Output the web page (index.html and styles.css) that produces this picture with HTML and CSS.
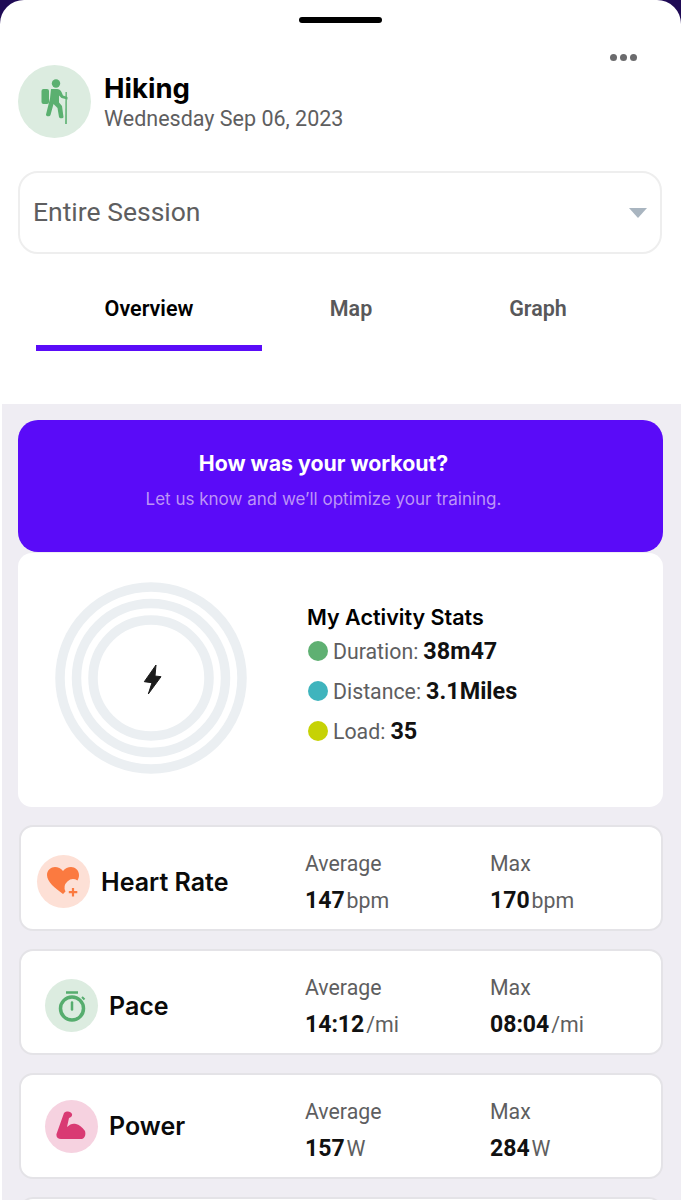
FILE: index.html
```html
<!DOCTYPE html>
<html lang="en">
<head>
<meta charset="utf-8">
<title>Hiking</title>
<link rel="stylesheet" href="styles.css">
</head>
<body>
<div class="sheet">
  <header class="top">
    <div class="handle"></div>
    <div class="dots"><i></i><i></i><i></i></div>
    <div class="activity">
      <div class="badge badge-hike">
        <svg width="28" height="46" viewBox="0 0 28 46"><circle cx="15" cy="4.500" r="4.200" fill="#5bb070"/><rect x="0.500" y="10" width="7.500" height="15" rx="2" fill="#5bb070"/><path d="M10 10h6c2 0 3.500 1 4.500 3l1.500 3.500 4.500 1.500v2.500l-6-1.500-2.500-2.500v7l3 3.500 1.500 11c.2 1.500-4 2-4.500 0l-1.500-9-4-4-3 11c-.5 2-5 1.500-4.500-.5l4-16z" fill="#5bb070"/><path d="M24.500 13h1.300v32h-1.600z" fill="#5bb070"/></svg>
      </div>
      <div class="activity-text">
        <div class="activity-name">Hiking</div>
        <div class="activity-date">Wednesday Sep 06, 2023</div>
      </div>
    </div>
    <div class="select">
      <span>Entire Session</span>
      <span class="caret"></span>
    </div>
    <nav class="tabs">
      <div class="tab tab-active">Overview</div>
      <div class="tab">Map</div>
      <div class="tab">Graph</div>
    </nav>
  </header>
  <main class="content">
    <section class="banner">
      <h2>How was your workout?</h2>
      <p>Let us know and we’ll optimize your training.</p>
    </section>
    <section class="stats">
      <div class="rings">
        <svg width="192" height="192" viewBox="0 0 192 192" fill="none" stroke="#ebeff2" stroke-width="9.500"><circle cx="96" cy="96" r="91"/><circle cx="96" cy="96" r="74.500"/><circle cx="96" cy="96" r="58"/><path d="M101 83L89.300 99.700 97 100.700 93.300 112 106 94.700 100 94z" fill="#1c1c1c" stroke="#1c1c1c" stroke-width="1" stroke-linejoin="round"/></svg>
      </div>
      <div class="stats-list">
        <h3>My Activity Stats</h3>
        <div class="stat"><i class="dot dot-green"></i><span class="stat-label">Duration:</span><b>38m47</b></div>
        <div class="stat"><i class="dot dot-teal"></i><span class="stat-label">Distance:</span><b>3.1Miles</b></div>
        <div class="stat"><i class="dot dot-lime"></i><span class="stat-label">Load:</span><b>35</b></div>
      </div>
    </section>
    <section class="metric">
      <div class="metric-name metric-wide">
        <div class="icon icon-heart">
          <svg width="34" height="32" viewBox="0 0 34 32"><path d="M16 28C8 22 0 16 0 9c0-5 4-8 8-8 3 0 6 1.500 8 4 2-2.500 5-4 8-4 4 0 8 3 8 8 0 2-.5 3.500-1.500 5.500a8.500 8.500 0 0 0-12 11z" fill="#fb7a40"/><path d="M26 22v8.500M21.800 26.200h8.500" stroke="#fb7a40" stroke-width="2.200" fill="none"/></svg>
        </div>
        <span>Heart Rate</span>
      </div>
      <div class="val"><div class="val-head">Average</div><div class="val-num"><b>147</b><span>bpm</span></div></div>
      <div class="val"><div class="val-head">Max</div><div class="val-num"><b>170</b><span>bpm</span></div></div>
    </section>
    <section class="metric">
      <div class="metric-name">
        <div class="icon icon-pace">
          <svg width="30" height="32" viewBox="0 0 30 32" fill="none" stroke="#56ad6e" stroke-width="3.500"><circle cx="15" cy="18.500" r="11.500"/><path d="M9 2.500h12" stroke-width="2.500"/><path d="M15 12.500v7" stroke-linecap="round" stroke-width="2.500"/><path d="M25 7l2.500 2.500" stroke-width="2"/></svg>
        </div>
        <span>Pace</span>
      </div>
      <div class="val"><div class="val-head">Average</div><div class="val-num"><b>14:12</b><span>/mi</span></div></div>
      <div class="val"><div class="val-head">Max</div><div class="val-num"><b>08:04</b><span>/mi</span></div></div>
    </section>
    <section class="metric">
      <div class="metric-name metric-raised">
        <div class="icon icon-power">
          <svg width="32" height="30" viewBox="0 0 32 30"><path d="M8 2c3-2.500 7-1.500 8 1 .5 2-1 3.500-3 4l-2 9c3-3 6-4 9-3 3 .5 6 3 9 7 1 4 0 7-3 8H5c-3 0-5-2-4.500-5z" fill="#d93a73"/></svg>
        </div>
        <span>Power</span>
      </div>
      <div class="val"><div class="val-head">Average</div><div class="val-num"><b>157</b><span>W</span></div></div>
      <div class="val"><div class="val-head">Max</div><div class="val-num"><b>284</b><span>W</span></div></div>
    </section>
    <section class="metric"></section>
  </main>
</div>
</body>
</html>
```
FILE: styles.css
```css
* { box-sizing: border-box; }
html, body { margin: 0; height: 1200px; overflow: hidden; }
body { background: #1f0a55; font-family: Roboto, "Liberation Sans", sans-serif; color: #000; }
.sheet { height: 1200px; background: #fff; border-radius: 24px 24px 0 0; overflow: hidden; display: flex; flex-direction: column; }
.top { height: 404px; padding: 17px 18px 0; display: flex; flex-direction: column; flex: none; }
.handle { width: 83px; height: 6px; border-radius: 3px; background: #000; align-self: center; }
.dots { display: flex; gap: 3px; align-self: flex-end; margin: 31px 26px 0 0; height: 8px; }
.dots i { width: 7px; height: 7px; border-radius: 50%; background: #6b6b6d; }
.activity { display: flex; align-items: center; gap: 13px; margin-top: 3px; }
.badge { width: 73px; height: 73px; border-radius: 50%; display: flex; align-items: center; justify-content: center; padding-left: 1px; }
.badge-hike { background: #dcece0; }
.activity-text { display: flex; flex-direction: column; gap: 2px; }
.activity-name { font-family: Inter, Roboto, sans-serif; font-size: 27.500px; line-height: 33px; font-weight: 700; }
.activity-date { font-size: 21.500px; line-height: 24px; color: #5e5e60; }
.select { margin: 33px 0 0 0; height: 83px; width: 644px; border: 2px solid #eeeeee; border-radius: 20px; display: flex; align-items: center; justify-content: space-between; padding: 0 13px 2px 13px; font-size: 26.500px; color: #5e5e60; }
.caret { width: 0; height: 0; border-left: 9.500px solid transparent; border-right: 9.500px solid transparent; border-top: 10px solid #a9b5c0; margin-top: 2px; }
.tabs { display: grid; grid-template-columns: 226px 178px 196px; margin: 35px 0 0 18px; }
.tab { height: 62px; padding-top: 7px; text-align: center; font-size: 21.500px; line-height: 26px; font-weight: 600; color: #58585a; }
.tab-active { color: #000; border-bottom: 6px solid #5a0cf8; }
.content { flex: 1; margin-left: 2px; background: #efedf3; padding: 16px 18px 0 16px; display: flex; flex-direction: column; }
.banner { flex: none; height: 132px; border-radius: 20px; background: #5a0bf8; text-align: center; padding: 29px 34px 0 0; font-family: Inter, Roboto, sans-serif; }
.banner h2 { margin: 0; font-size: 21.300px; line-height: 28px; font-weight: 700; color: #fff; }
.banner p { margin: 11px 0 0; font-size: 17px; line-height: 22px; color: #bd94f7; }
.stats { flex: none; height: 254px; margin-top: 1px; background: #fff; border-radius: 14px; display: flex; padding: 29px 0 0 37px; }
.stats-list { margin: 21px 0 0 60px; }
.stats-list h3 { margin: 0; font-family: Inter, Roboto, sans-serif; font-size: 21.500px; line-height: 28px; font-weight: 600; }
.stat { display: flex; align-items: center; gap: 5px; height: 40px; font-size: 21.300px; color: #5e5e60; }
.stat b { font-size: 23.400px; font-weight: 700; color: #111; }
.dot { width: 20px; height: 20px; border-radius: 50%; margin-left: 1px; }
.dot-green { background: #5fb072; }
.dot-teal { background: #3fb4bd; }
.dot-lime { background: #c6d205; }
.metric { flex: none; height: 106px; margin: 18px 0 0 1px; width: 644px; background: #fff; border: 2px solid #e4e3e7; border-radius: 14px; display: grid; grid-template-columns: 284px 185px 1fr; align-items: center; padding-top: 7px; }
.metric-name { display: flex; align-items: center; gap: 11px; padding-left: 24px; font-family: Inter, Roboto, sans-serif; font-size: 25px; font-weight: 600; color: #0a0a0a; }
.metric-wide { padding-left: 16px; }
.metric-raised { margin-top: -7px; }
.icon { width: 53px; height: 53px; border-radius: 50%; display: flex; align-items: center; justify-content: center; flex: none; }
.icon-heart { background: #fde0d6; }
.icon-pace { background: #dcece0; }
.icon-power { background: #f6d2e0; }
.val { display: flex; flex-direction: column; gap: 11px; padding-top: 3px; }
.val-head { font-size: 21.300px; line-height: 24px; color: #5e5e60; }
.val-num { display: flex; align-items: baseline; gap: 2px; font-size: 21.300px; line-height: 27px; color: #5e5e60; }
.val-num b { font-size: 23px; font-weight: 700; color: #111; }
```
